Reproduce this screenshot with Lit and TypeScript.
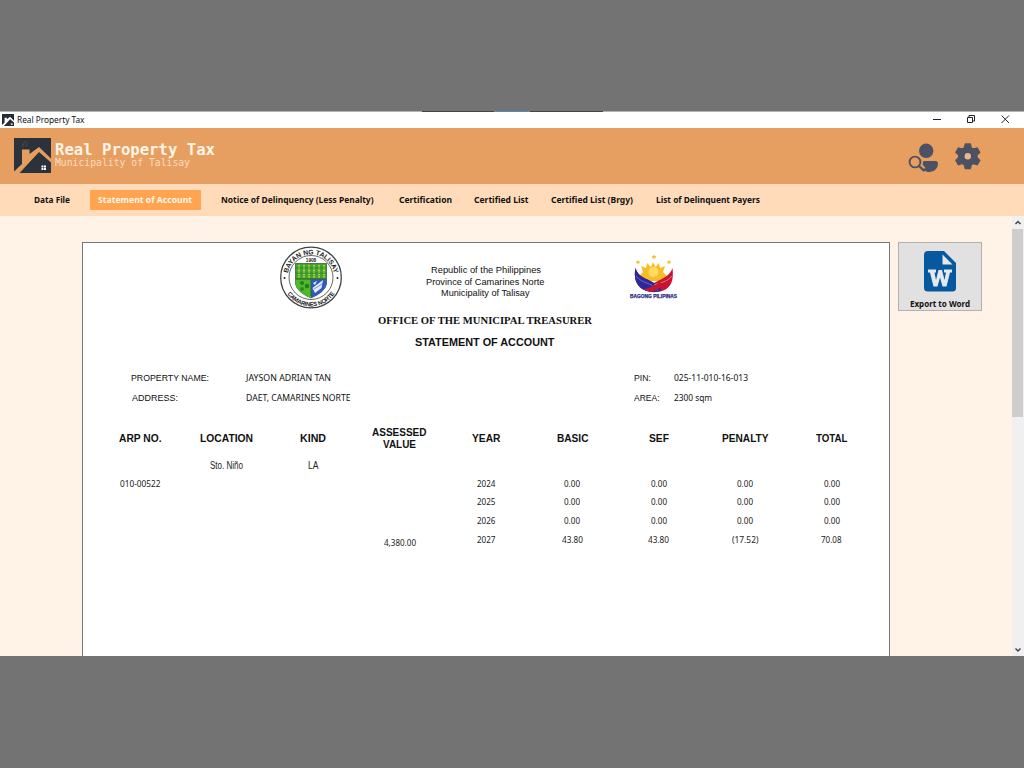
import { LitElement, html, css, svg } from "lit";
import { customElement, property } from "lit/decorators.js";

/** Single line of text, condensed or widened so that it spans a given width. */
@customElement("fitted-text")
class FittedText extends LitElement {
  static styles = css`
    :host { display: inline-block; white-space: pre; text-align: left; }
    .run { display: inline-block; white-space: pre; transform-origin: 0 50%; }
  `;
  @property() text = "";
  @property({ type: Number }) span = 0;
  updated() {
    const run = this.renderRoot.querySelector<HTMLElement>(".run");
    if (!run || !this.span) return;
    const natural = run.offsetWidth ? run.getBoundingClientRect().width : this.span;
    run.style.transform = `scaleX(${this.span / natural})`;
    run.style.marginRight = `${this.span - natural}px`;
  }
  render() {
    return html`<span class="run">${this.text}</span>`;
  }
}

const t = (text: string, span: number) => html`<fitted-text .text=${text} .span=${span}></fitted-text>`;

const house = svg`
  <rect width="37" height="35" fill="#2c323c"/>
  <path d="M0 33.500L8 26V11.500H15.500V16L25 9L37 20.500V24.500L25 14L5.500 35H0Z" fill="#e69d5e"/>
  <path d="M9.500 9.500C7 8.500 8 6 10 6.500C9 4 12 2.500 13 4.500M11 8C13 8 14 6 12.500 5" fill="none" stroke="#5a5655" stroke-width=".7"/>
  <path d="M27.500 27.500h2v2h-2zM30 27.500h2v2h-2zM27.500 30h2v2h-2zM30 30h2v2h-2z" fill="#fff"/>`;

const tabs: [string, number, string][] = [
  ["Data File", 36, "data"],
  ["Statement of Account", 94, "active"],
  ["Notice of Delinquency (Less Penalty)", 152.5, "notice"],
  ["Certification", 53, "cert"],
  ["Certified List", 54.5, "list"],
  ["Certified List (Brgy)", 82, "brgy"],
  ["List of Delinquent Payers", 104, "payers"],
];

const heads: [string, number][] = [
  ["ARP NO.", 42.5], ["LOCATION", 53], ["KIND", 26], ["", 0],
  ["YEAR", 28.5], ["BASIC", 31.5], ["SEF", 20], ["PENALTY", 46.5], ["TOTAL", 31.5],
];

type Cell = [string, number];
const zero: Cell = ["0.00", 16];
const none: Cell = ["", 0];
const rows: Cell[][] = [
  [none, ["Sto. Niño", 33], ["LA", 10.5], none, none, none, none, none, none],
  [["010-00522", 40.5], none, none, none, ["2024", 18.5], zero, zero, zero, zero],
  [none, none, none, none, ["2025", 18.5], zero, zero, zero, zero],
  [none, none, none, none, ["2026", 18.5], zero, zero, zero, zero],
  [none, none, none, ["4,380.00", 32], ["2027", 18.5], ["43.80", 21], ["43.80", 21], ["(17.52)", 26.5], ["70.08", 20.5]],
];

@customElement("app-root")
class AppRoot extends LitElement {
  static styles = css`
    :host { display: block; width: 1024px; height: 768px; box-sizing: border-box; padding: 111px 0 112px; overflow: hidden; background: #737373; color: #111; font: 9.7px/12px "Noto Sans", sans-serif; }
    svg { display: block; flex: none; overflow: visible; }
    .window { height: 545px; display: flex; flex-direction: column; background: #fff3e8; }
    .edge { height: 1px; display: flex; background: #b2b2b2; flex: none; }
    .edge i { height: 1px; }
    .e1 { width: 422px; } .e2 { width: 72px; background: #454545; } .e3 { width: 36px; background: #4c93bb; } .e4 { width: 73px; background: #454545; }
    .title { height: 16px; flex: none; display: flex; background: #fff; padding: 2px 0 0 2px; box-sizing: border-box; color: #111; }
    .title fitted-text { margin: -1px 0 0 3px; line-height: 14px; }
    .title .spacer { flex: 1; }
    .header { height: 56px; flex: none; display: flex; background: #e69f60; box-sizing: border-box; padding: 10px 0 0 14px; color: #fff4e8; }
    .brand { display: flex; flex-direction: column; width: 850px; padding: 4px 0 0 4px; font-family: "DejaVu Sans Mono", monospace; }
    .brand .name { font-size: 15.3px; line-height: 17px; height: 16px; font-weight: 700; }
    .brand .town { font-size: 9.8px; line-height: 10px; height: 10px; color: #fbdcbf; }
    .nav { height: 32px; flex: none; display: flex; background: #ffdbba; box-sizing: border-box; padding: 6px 0 0 34.4px; font-weight: 700; font-size: 9.6px; line-height: 19px; }
    .tab { height: 20px; }
    .active { background: #ffa451; color: #fff6ec; margin-left: 20px; padding: 0 9px 0 8px; }
    .notice { margin-left: 19.5px; } .cert { margin-left: 25.5px; } .list { margin-left: 22px; } .brgy { margin-left: 22.5px; } .payers { margin-left: 23px; }
    .body { flex: 1; min-height: 0; display: flex; }
    .paper { margin: 25.5px 0 0 81.5px; width: 808px; box-sizing: border-box; background: #fff; border: 1px solid #777; border-bottom: 0; }
    .top { display: flex; height: 68px; }
    .seal { margin: 3px 0 0 196.5px; }
    .gov { width: 200px; margin: 21.5px 0 0 42.5px; text-align: center; font: 9.6px/11.5px "Liberation Sans", sans-serif; }
    .gov div { height: 11.5px; }
    .bagong { margin: 8px 0 0 43.5px; }
    .office { text-align: center; font: 700 11.3px/14px "Liberation Serif", serif; height: 14px; margin: 2px 1.5px 0 0; }
    .soa { text-align: center; font: 700 10.5px/14px "Liberation Sans", sans-serif; height: 14px; margin: 8px 1px 0 0; }
    .info { display: grid; grid-template-columns: 115px 388px 40px 120px; grid-template-rows: 20px 20px; margin: 19.5px 0 0 48.3px; height: 40px; line-height: 20px; }
    .lab { font-family: "Liberation Sans", sans-serif; font-size: 9.8px; }
    .in { padding-left: 1.5px; }
    .heads { display: grid; grid-template-columns: repeat(9, 86.4px); margin: 16.5px 0 0 14.8px; height: 28px; align-items: center; font: 700 10.3px/12px "Liberation Sans", sans-serif; text-align: center; }
    .two { display: flex; flex-direction: column; align-items: center; }
    .row { display: grid; grid-template-columns: repeat(9, 86.4px); margin-left: 14.8px; height: 18.8px; line-height: 18.8px; text-align: center; color: #222; }
    .row0 { margin-top: 4px; height: 18px; line-height: 18px; font-family: "Liberation Sans", sans-serif; font-size: 10.3px; }
    .low { padding-top: 3px; }
    .export { margin: 26px 0 0 8.5px; width: 84px; height: 69px; box-sizing: border-box; border: 1px solid #b4b0ac; background: #e1e1e1; display: flex; flex-direction: column; align-items: center; padding-top: 8px; font-weight: 700; font-size: 9.3px; }
    .export fitted-text { margin-top: 6px; line-height: 12px; }
    .bar { width: 12px; margin-left: auto; background: #f0f0f0; display: flex; flex-direction: column; }
    .thumb { height: 188px; background: #cdcdcd; margin-right: 1px; }
    .grow { flex: 1; }
  `;

  seal() {
    return svg`<svg class="seal" width="64" height="64" viewBox="0 0 64 64">
      <defs><path id="up" d="M8.500 32A23.500 23.500 0 0 1 55.500 32"/><path id="down" d="M3.600 32A28.400 28.400 0 0 0 60.400 32"/></defs>
      <circle cx="32" cy="31.500" r="30.300" fill="#fff" stroke="#3d4547" stroke-width="1.300"/>
      <circle cx="32" cy="31.500" r="22" fill="#fff" stroke="#555" stroke-width=".9"/>
      <text font-family="Liberation Sans" font-weight="700" font-size="6.800" fill="#222"><textPath href="#up" startOffset="50%" text-anchor="middle" textLength="64">BAYAN NG TALISAY</textPath></text>
      <text font-family="Liberation Sans" font-weight="700" font-size="6" fill="#222"><textPath href="#down" startOffset="50%" text-anchor="middle" textLength="56">CAMARINES NORTE</textPath></text>
      <circle cx="5.500" cy="32" r="1" fill="#222"/><circle cx="58.500" cy="32" r="1" fill="#222"/>
      <path d="M16.500 17.500H47.500V38Q46 46 32 52Q18 46 16.500 38Z" fill="#43a52d" stroke="#31502b" stroke-width=".7"/>
      <path d="M32 33H47.500V38Q46 46 32 52Z" fill="#3158c8"/>
      <path d="M16.500 33H32V52Q18 46 16.500 38Z" fill="#50b927"/>
      <path d="M20 19V32M25 19V32M30 19V32M35 19V32M40 19V32M45 19V32" stroke="#e1dd54" stroke-width="1.400" stroke-dasharray="1.500 .7"/>
      <path d="M17 22H47M17 27H47" stroke="#21822b" stroke-width=".7"/>
      <path d="M17 33H47M32 33V50" stroke="#315c34"/>
      <circle cx="23" cy="37" r="2" fill="#247c21"/><circle cx="28" cy="40" r="2.200" fill="#247c21"/><circle cx="23" cy="43" r="2" fill="#2c8a25"/>
      <path d="M33.500 42L44 34L42.500 42L36 47ZM34 37L38 35L36 39Z" fill="#e3edff"/><path d="M35 43L43 38" stroke="#6e91de"/>
      <text x="32" y="16.200" text-anchor="middle" font-family="Liberation Sans" font-weight="700" font-size="4.700" fill="#222">1908</text>
    </svg>`;
  }

  bagong() {
    return svg`<svg class="bagong" width="50" height="52" viewBox="0 0 50 52">
      <g fill="#f7bd28"><path d="M24 11L26.500 16L30 12L31 17L36 15L34 21L38 25L34 30H14L10 25L14 21L12 15L17 17L18 12L22 16Z"/>
      <path d="M25 3.500l.8 1.500 1.700.2-1.200 1.200.3 1.700-1.600-.8-1.600.8.3-1.700-1.200-1.200 1.700-.2zM9 9l.7 1.300 1.500.2-1 1 .2 1.500-1.400-.7-1.400.7.2-1.500-1-1 1.500-.2zM40 9l.7 1.300 1.500.2-1 1 .2 1.500-1.400-.7-1.400.7.2-1.500-1-1 1.500-.2z"/></g>
      <circle cx="24.500" cy="21" r="5" fill="#ffdc5f"/>
      <path d="M6.500 17C9 26 17 27 25 32C34 27 41 25 43.500 17C45 30 42 37 33 40C25 42 14 41 9 34C6 30 5 23 6.500 17Z" fill="#c9142f"/>
      <path d="M6.500 17C9 26 17 27 25 32C29 34.500 32 37 32 40C25 42.500 14 41 9 34C6 30 5 23 6.500 17Z" fill="#2c2a9b"/>
      <path d="M7 25C13 33 23 31 29 40" fill="none" stroke="#7773c5" stroke-width=".8"/>
      <path d="M25 34C33 31 38 31 43 25" fill="none" stroke="#ef8792" stroke-width=".8"/>
      <path d="M14 38.500C22 36.500 27 34 31 31L35 34C30 37 27 40 22 41Z" fill="#c9142f"/>
      <text x="1" y="47" textLength="47" lengthAdjust="spacingAndGlyphs" font-family="Liberation Sans" font-weight="700" font-size="4.900" fill="#29297f" stroke="#29297f" stroke-width=".25">BAGONG PILIPINAS</text>
    </svg>`;
  }

  render() {
    return html`<div class="window">
      <div class="edge"><i class="e1"></i><i class="e2"></i><i class="e3"></i><i class="e4"></i></div>
      <div class="title">
        <svg width="12" height="12" viewBox="0 0 37 35" preserveAspectRatio="none">
          <rect width="37" height="35" fill="#252c33"/><path d="M0 32L8 25V11H15V15L25 8L37 20V25L25 15L6 35H0Z" fill="#fff"/><path d="M27 27h6v5h-6z" fill="#ccc"/>
        </svg>
        ${t("Real Property Tax", 67.5)}
        <span class="spacer"></span>
        <svg width="92" height="14" viewBox="932 114 92 14" fill="none" stroke="#222" stroke-width="1">
          <path d="M933 119.500H941"/><path d="M967.500 117.500H972.500V122.500H967.500ZM969 117.500V115.500H974.500V121H972.500"/><path d="M1001.500 115.500L1009 123M1009 115.500L1001.500 123"/>
        </svg>
      </div>
      <div class="header">
        <svg width="37" height="35" viewBox="0 0 37 35">${house}</svg>
        <div class="brand"><div class="name">${t("Real Property Tax", 160)}</div><div class="town">${t("Municipality of Talisay", 135)}</div></div>
        <svg width="80" height="36" viewBox="905 138 80 36">
          <circle cx="926.200" cy="150.800" r="7.200" fill="#4c5263"/>
          <path d="M923.500 161H935.500Q938 161 938 163.500C938 169.500 933.500 172 927.500 172L922.500 169.500L925.500 168L922.500 164.500Z" fill="#4c5263"/>
          <circle cx="915" cy="162" r="5.400" fill="none" stroke="#4c5263" stroke-width="1.900"/><path d="M919 166L924.500 171.200" stroke="#4c5263" stroke-width="2.300"/>
          <g transform="translate(967.800 156.300)" fill="#4c5263"><circle r="9.800"/>
            ${[0, 60, 120, 180, 240, 300].map((a) => svg`<path transform="rotate(${a})" d="M-4.300 -8L-3 -13H3L4.300 -8Z"/>`)}
            <circle r="5" fill="#4d4e68"/><circle r="3.200" fill="#efb684"/></g>
        </svg>
      </div>
      <div class="nav">${tabs.map(([s, w, c]) => html`<div class="tab ${c}">${t(s, w)}</div>`)}</div>
      <div class="body">
        <div class="paper">
          <div class="top">${this.seal()}
            <div class="gov"><div>${t("Republic of the Philippines", 110)}</div><div>${t("Province of Camarines Norte", 118.5)}</div><div>${t("Municipality of Talisay", 88.5)}</div></div>
            ${this.bagong()}
          </div>
          <div class="office">${t("OFFICE OF THE MUNICIPAL TREASURER", 214)}</div>
          <div class="soa">${t("STATEMENT OF ACCOUNT", 139.5)}</div>
          <div class="info">
            <div class="lab">${t("PROPERTY NAME:", 78)}</div><div>${t("JAYSON ADRIAN TAN", 85)}</div><div class="lab">${t("PIN:", 17)}</div><div>${t("025-11-010-16-013", 74)}</div>
            <div class="lab in">${t("ADDRESS:", 46)}</div><div>${t("DAET, CAMARINES NORTE", 104.5)}</div><div class="lab">${t("AREA:", 25.5)}</div><div>${t("2300 sqm", 38)}</div>
          </div>
          <div class="heads">${heads.map(([s, w]) => s ? html`<div>${t(s, w)}</div>` : html`<div class="two">${t("ASSESSED", 54.5)}${t("VALUE", 33)}</div>`)}</div>
          ${rows.map((r, i) => html`<div class="row row${i}">${r.map(([s, w], c) => html`<div class=${c === 3 ? "low" : ""}>${s ? t(s, w) : ""}</div>`)}</div>`)}
        </div>
        <div class="export">
          <svg width="32" height="41" viewBox="0 0 32 41"><path d="M4 0H20L32 12V37Q32 40.500 28.500 40.500H4Q0 40.500 0 37V4Q0 0 4 0Z" fill="#06599f"/><path d="M18.500 3.500V13.500H28.500Z" fill="#e6e9ec"/>
            <path d="M4 18.500H12V21.500H10.500L12 29L14.500 19H18L20.500 29L22 21.500H20V18.500H28V21.500H26L22.500 35.500H18.500L16 26.500L13.500 35.500H9.500L6 21.500H4Z" fill="#e6e9ec"/></svg>
          ${t("Export to Word", 60)}
        </div>
        <div class="bar">
          <svg width="12" height="13" viewBox="0 0 12 13"><path d="M3.500 8L6 5.500L8.500 8" fill="none" stroke="#444" stroke-width="1.500"/></svg>
          <div class="thumb"></div><div class="grow"></div>
          <svg width="12" height="12" viewBox="0 0 12 12"><path d="M3.500 4.500L6 7L8.500 4.500" fill="none" stroke="#444" stroke-width="1.500"/></svg>
        </div>
      </div>
    </div>`;
  }
}
